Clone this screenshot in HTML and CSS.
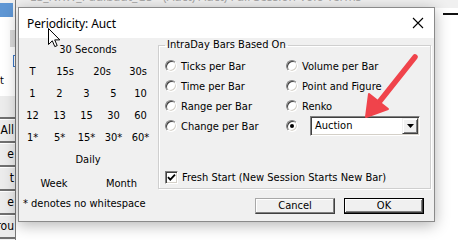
FILE: index.html
```html
<!DOCTYPE html>
<html>
<head>
<meta charset="utf-8">
<link rel="stylesheet" href="styles.css">
</head>
<body>
<div class="desktop">
  <div class="bg-top"><span class="bg-title">ES_NRW_Paulbaut_G5 - (Auct) Auct) Full Session Volo Terms</span></div>
  <div class="bg-left">
    <div class="bl-blue"></div>
    <div class="bl-white">
      <div class="bl-box"></div>
      <div class="bl-sq"></div>
      <div class="bl-t">t</div>
    </div>
    <div class="bl-btn"></div>
    <div class="bl-btn">All</div>
    <div class="bl-btn">e</div>
    <div class="bl-btn">t</div>
    <div class="bl-btn">e</div>
    <div class="bl-btn">rou</div>
  </div>
  <div class="bg-right"><div class="bg-dash"></div></div>

  <div class="dialog">
    <div class="titlebar">
      <span class="title">Periodicity: Auct</span>
      <svg class="close" width="12" height="12" viewBox="0 0 12 12"><path d="M1 1L11 11M11 1L1 11" stroke="#000" stroke-width="1.1" fill="none"/></svg>
    </div>
    <div class="body">
      <div class="periods">
        <div class="row head">30 Seconds</div>
        <div class="row c4"><span>T</span><span>15s</span><span>20s</span><span>30s</span></div>
        <div class="row c5"><span>1</span><span>2</span><span>3</span><span>5</span><span>10</span></div>
        <div class="row c5"><span>12</span><span>13</span><span>15</span><span>30</span><span>60</span></div>
        <div class="row c5"><span>1*</span><span>5*</span><span>15*</span><span>30*</span><span>60*</span></div>
        <div class="row head">Daily</div>
        <div class="row c2"><span>Week</span><span>Month</span></div>
        <div class="note">* denotes no whitespace</div>
      </div>
      <div class="side">
        <fieldset class="group">
          <legend>IntraDay Bars Based On</legend>
          <div class="radios">
            <div class="opt"><span class="radio"></span>Ticks per Bar</div>
            <div class="opt"><span class="radio"></span>Volume per Bar</div>
            <div class="opt"><span class="radio"></span>Time per Bar</div>
            <div class="opt"><span class="radio"></span>Point and Figure</div>
            <div class="opt"><span class="radio"></span>Range per Bar</div>
            <div class="opt"><span class="radio"></span>Renko</div>
            <div class="opt"><span class="radio"></span>Change per Bar</div>
            <div class="opt"><span class="radio on"></span>
              <div class="select"><span class="sel-text">Auction</span><span class="sel-btn"><svg width="7" height="4" viewBox="0 0 7 4"><path d="M0 0H7L3.5 4Z" fill="#000"/></svg></span></div>
            </div>
          </div>
          <div class="check-row"><span class="check"><svg width="9" height="9" viewBox="0 0 9 9"><path d="M1 4.2L3.3 6.6L8 1.6" stroke="#000" stroke-width="1.8" fill="none"/></svg></span>Fresh Start (New Session Starts New Bar)</div>
        </fieldset>
        <div class="buttons">
          <div class="btn">Cancel</div>
          <div class="btn default">OK</div>
        </div>
      </div>
    </div>
  </div>

  <svg class="annot" width="458" height="240" viewBox="0 0 458 240">
    <line x1="415" y1="57" x2="380" y2="101" stroke="#f0434b" stroke-width="5.5" stroke-linecap="round"/>
    <polygon points="366,117 369,94 388,109" fill="#f0434b" stroke="#f0434b" stroke-width="2" stroke-linejoin="round"/>
  </svg>
  <svg class="cursor" width="13" height="20" viewBox="0 0 13 20">
    <path d="M0.5 0.5V16.5L4.3 12.8L6.8 18.6L9.2 17.6L6.7 11.9H11.8Z" fill="#fff" stroke="#000" stroke-width="1" stroke-linejoin="miter"/>
  </svg>
</div>
</body>
</html>
```
FILE: styles.css
```css
* { box-sizing: border-box; }
html, body { margin: 0; padding: 0; }
body {
  width: 458px;
  height: 240px;
  overflow: hidden;
  background: #ffffff;
  font-family: Tahoma, "DejaVu Sans Condensed", "DejaVu Sans", sans-serif;
  font-size: 11px;
  color: #000;
}
.desktop {
  position: relative;
  width: 458px;
  height: 240px;
  overflow: hidden;
}

/* background windows */
.bg-top {
  position: absolute;
  left: 0; top: 0;
  width: 458px; height: 8px;
  background: #f0f0f0;
  overflow: hidden;
}
.bg-title {
  position: absolute;
  left: 30px; top: -12px;
  font-family: "Noto Sans", sans-serif;
  font-size: 12px;
  color: #a8a8a8;
  white-space: nowrap;
}
.bg-left {
  position: absolute;
  left: 0; top: 0;
  width: 16px; height: 240px;
  background: #f0f0f0;
  border-right: 1px solid #7a7a7a;
  display: flex;
  flex-direction: column;
  overflow: hidden;
  padding-top: 3px;
}
.bl-blue {
  height: 14px;
  width: 13px;
  flex: none;
  background: #5e96d4;
}
.bl-white {
  position: relative;
  height: 78px;
  flex: none;
  background: #fff;
}
.bl-box {
  position: absolute;
  left: 10px; top: 13px;
  width: 6px; height: 17px;
  background: #d9d9d9;
}
.bl-sq {
  position: absolute;
  left: 13px; top: 38px;
  width: 3px; height: 12px;
  border: 1px solid #3c78c8;
  border-right: 0;
}
.bl-t {
  position: absolute;
  left: 0; top: 58px;
  font-size: 11px;
  line-height: 12px;
}
.bl-btn {
  height: 24px;
  flex: none;
  background: #ececec;
  border-top: 1px solid #fff;
  border-bottom: 2px solid #707070;
  text-align: right;
  font-size: 12px;
  line-height: 21px;
  white-space: nowrap;
  direction: rtl;
  padding-right: 1px;
}
.bl-btn:first-of-type { height: 16px; }
.bg-right {
  position: absolute;
  left: 435px; top: 8px;
  width: 23px; height: 232px;
  background: #fff;
}
.bg-dash {
  margin: 5px 0 0 8px;
  height: 2px;
  background: #111;
}

/* dialog */
.dialog {
  position: absolute;
  left: 18px; top: 7px;
  width: 417px; height: 215px;
  background: #f0f0f0;
  border: 1px solid #8a8a8a;
  box-shadow: 0 3px 14px rgba(0,0,0,0.3);
  display: flex;
  flex-direction: column;
}
.titlebar {
  height: 30px;
  background: #fff;
  display: flex;
  align-items: center;
  justify-content: space-between;
  padding: 0 10px 0 8px;
  flex: none;
}
.title {
  font-family: "Segoe UI", "Noto Sans", "Open Sans", sans-serif;
  font-size: 12px;
  letter-spacing: -0.1px;
}
.close { display: block; }
.body {
  flex: 1;
  display: flex;
}
.periods {
  width: 135px;
  flex: none;
}
.row {
  height: 22px;
  display: grid;
  align-items: center;
  justify-items: center;
  white-space: nowrap;
}
.row.head { padding-left: 3px; }
.row.c5 { grid-template-columns: repeat(5, 27px); }
.row.c4 { grid-template-columns: 27px 38px 36px 36px; }
.row.c2 { grid-template-columns: 70px 65px; margin-top: 2px; }
.note {
  padding-left: 4px;
  height: 20px;
  line-height: 20px;
  white-space: nowrap;
}
.side {
  flex: 1;
  display: flex;
  flex-direction: column;
  padding: 1px 3px 0 4px;
}
.group {
  margin: 0;
  padding: 5px 0 0 6px;
  border: 1px solid #cfcfcf;
  box-shadow: inset 1px 1px 0 #fff, 1px 1px 0 #fff;
  min-width: 0;
  height: 150px;
}
.group legend {
  padding: 0 2px;
  line-height: 12px;
  white-space: nowrap;
}
.radios {
  display: grid;
  grid-template-columns: 121px 1fr;
  grid-auto-rows: 20px;
}
.opt {
  display: flex;
  align-items: center;
  white-space: nowrap;
}
.radio {
  width: 12px; height: 12px;
  border-radius: 50%;
  background: #fff;
  border: 1px solid;
  border-color: #808080 #ffffff #ffffff #808080;
  box-shadow: inset 1px 1px 0 #404040, inset -1px -1px 0 #d4d0c8;
  margin-right: 4px;
  flex: none;
  position: relative;
}
.radio.on::after {
  content: "";
  position: absolute;
  left: 3px; top: 3px;
  width: 4px; height: 4px;
  border-radius: 50%;
  background: #000;
}
.select {
  margin-left: 8px;
  width: 110px;
  height: 20px;
  background: #fff;
  border: 1px solid;
  border-color: #808080 #ffffff #ffffff #808080;
  box-shadow: inset 1px 1px 0 #404040, inset -1px -1px 0 #d4d0c8;
  display: flex;
  align-items: center;
  justify-content: space-between;
  padding: 2px 2px 2px 4px;
}
.sel-text { line-height: 14px; }
.sel-btn {
  width: 16px; height: 16px;
  margin-right: -1px;
  background: #f0f0f0;
  border: 1px solid;
  border-color: #f0f0f0 #404040 #404040 #f0f0f0;
  box-shadow: inset 1px 1px 0 #fff, inset -1px -1px 0 #808080;
  display: flex;
  align-items: center;
  justify-content: center;
}
.sel-btn svg { display: block; }
.check-row {
  margin-top: 31px;
  height: 20px;
  display: flex;
  align-items: center;
  white-space: nowrap;
}
.check {
  width: 13px; height: 13px;
  background: #fff;
  border: 1px solid;
  border-color: #808080 #ffffff #ffffff #808080;
  box-shadow: inset 1px 1px 0 #404040, inset -1px -1px 0 #d4d0c8;
  margin-right: 4px;
  display: flex;
  align-items: center;
  justify-content: center;
  flex: none;
}
.check svg { display: block; }
.buttons {
  display: flex;
  justify-content: flex-end;
  gap: 9px;
  margin-top: 9px;
  padding-right: 7px;
}
.btn {
  width: 80px;
  height: 16px;
  background: #f0f0f0;
  border: 1px solid;
  border-color: #a8a8a8 #404040 #404040 #a8a8a8;
  box-shadow: inset -1px -1px 0 #808080, inset 1px 1px 0 #fff;
  text-align: center;
  line-height: 14px;
}
.btn.default {
  border-color: #000;
  box-shadow: inset -1px -1px 0 #404040, inset 1px 1px 0 #fff, inset -2px -2px 0 #808080;
}

/* overlays */
.annot {
  position: absolute;
  left: 0; top: 0;
}
.cursor {
  position: absolute;
  left: 48px; top: 28px;
}
```
